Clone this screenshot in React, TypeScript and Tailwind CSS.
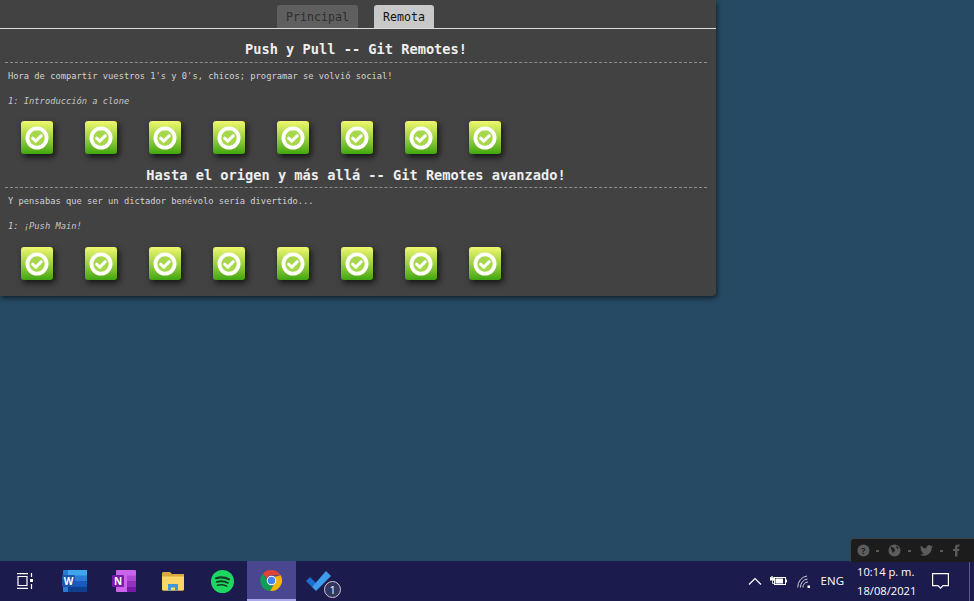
import React from "react";

const mono = "font-['DejaVu_Sans_Mono','Liberation_Mono',monospace]";

function Badge() {
  return (
    <div className="h-[33px] w-[32px] rounded-[3px] bg-gradient-to-b from-[#f1f86e] via-[#9dd23e] to-[#3fa60c] shadow-[2px_3px_6px_rgba(0,0,0,0.7)] flex items-center justify-center">
      <svg width="26" height="26" viewBox="0 0 26 26" fill="none">
        <circle cx="13" cy="13" r="9.600" stroke="#fff" strokeWidth="3.800" fill="#a6d84a" />
        <path d="M8.600 13.200l3.100 3 5.700-5.500" stroke="#fff" strokeWidth="3" strokeLinecap="round" strokeLinejoin="round" />
      </svg>
    </div>
  );
}

function Row({ mt }: { mt: string }) {
  return (
    <div className={`flex gap-[32px] pl-[16px] ${mt}`}>
      {[0, 1, 2, 3, 4, 5, 6, 7].map((i) => (
        <Badge key={i} />
      ))}
    </div>
  );
}

function Section({ title, text, level, rowMt, pt }: { title: string; text: string; level: string; rowMt: string; pt: string }) {
  return (
    <section>
      <h2 className={`h-[34px] ${pt} border-b border-dashed border-[#8d8d8d] text-center text-[13.66px] leading-[16px] font-bold text-[#eeeeee]`}>
        {title}
      </h2>
      <p className="h-[25px] pl-[3px] text-[8.76px] leading-[27px] text-[#d2d2d2]">{text}</p>
      <p className="h-[25px] pl-[3px] text-[8.76px] leading-[27px] italic text-[#c6c6c6]">{level}</p>
      <Row mt={rowMt} />
    </section>
  );
}

const Cell = ({ children, active }: { children: React.ReactNode; active?: boolean }) => (
  <div className={`h-[40px] w-[49.2px] flex items-center justify-center ${active ? "bg-[#48478f] border-b-2 border-[#a9a6ea]" : ""}`}>
    {children}
  </div>
);

const Sep = () => <span className="h-[2px] w-[3px] bg-[#5c5c5c]" />;

export default function App() {
  return (
    <div className="relative h-[601px] w-[974px] overflow-hidden flex flex-col bg-[#264a63] font-['Open_Sans',sans-serif]">
      <main className="flex-1">
        <div className={`${mono} h-[296px] w-[716px] rounded-br-[4px] bg-[#424242] shadow-[1px_2px_5px_rgba(0,0,0,0.6)]`}>
          <div className="h-[29px] pt-[5px] pl-[277px] flex gap-[16px] border-b border-[#dcdcdc]">
            <div className="h-[23px] w-[81px] rounded-t-[3px] bg-[#5f5f5f] text-center text-[11.6px] leading-[24px] text-[#2e2e2e]">Principal</div>
            <div className="h-[23px] w-[60px] rounded-t-[3px] bg-[#c8c8c8] text-center text-[11.6px] leading-[24px] text-[#111111]">Remota</div>
          </div>
          <div className="pl-[5px] pr-[9px]">
            <Section
              pt="pt-[12px]"
              title="Push y Pull -- Git Remotes!"
              text="Hora de compartir vuestros 1's y 0's, chicos; programar se volvió social!"
              level="1: Introducción a clone"
              rowMt="mt-[8px]"
            />
            <Section
              pt="pt-[13px]"
              title="Hasta el origen y más allá -- Git Remotes avanzado!"
              text="Y pensabas que ser un dictador benévolo sería divertido..."
              level="1: ¡Push Main!"
              rowMt="mt-[9px]"
            />
          </div>
        </div>
      </main>

      <div className="absolute left-[850px] top-[538px] h-[24px] w-[125px] rounded-tl-[4px] border-l border-t border-[#3c4247] bg-[#1c1c1c] flex items-center pl-[6px] text-[#5a5a5a]">
        <svg width="13" height="13" viewBox="0 0 13 13" className="mr-[6px]"><circle cx="6.500" cy="6.500" r="6" fill="#5c5c5c" /><text x="6.500" y="10" textAnchor="middle" fontSize="9" fontWeight="700" fill="#1c1c1c">?</text></svg>
        <Sep />
        <svg width="13" height="13" viewBox="0 0 13 13" className="ml-[9px] mr-[7px]"><circle cx="6.500" cy="6.500" r="6" fill="#5c5c5c" /><path d="M2.500 3l3.500.8 1 2.700-2 2.500-1.200-2.500zM8 1.500l3 2.500-2 1z" fill="#1c1c1c" /></svg>
        <Sep />
        <svg width="13" height="11" viewBox="0 0 24 20" className="ml-[9px] mr-[7px]"><path d="M24 2.400a9.800 9.800 0 0 1-2.800.800 5 5 0 0 0 2.200-2.700 9.800 9.800 0 0 1-3.100 1.200 4.900 4.900 0 0 0-8.400 4.500A14 14 0 0 1 1.700 1a4.900 4.900 0 0 0 1.500 6.600 4.900 4.900 0 0 1-2.200-.6c0 2.400 1.700 4.400 3.900 4.900a4.900 4.900 0 0 1-2.200.1 4.900 4.900 0 0 0 4.600 3.400A9.900 9.900 0 0 1 0 17.400 14 14 0 0 0 7.500 19.600c9.100 0 14.100-7.500 14.100-14v-.6A10 10 0 0 0 24 2.400z" fill="#5c5c5c" /></svg>
        <Sep />
        <svg width="7" height="13" viewBox="0 0 7 12" className="ml-[10px]"><path d="M2 12V6.500H0V4.500h2V3C2 1 3 0 4.800 0H6.500v2H5.300C4.600 2 4.400 2.300 4.400 3v1.500h2.100L6.200 6.500H4.400V12z" fill="#5c5c5c" /></svg>
      </div>

      <footer className="h-[40px] pl-[1px] bg-[#1c1b4e] flex items-center text-white">
        <Cell>
          <svg width="18" height="16" viewBox="0 0 18 16" fill="none" stroke="#fff" strokeWidth="1.200" className="-translate-x-[1px]">
            <path d="M1 .6h11M1 15.400h11M2 3.500h9v9H2z" />
            <path d="M15.500 0v4M15.500 11v5" />
            <rect x="14" y="6" width="3" height="3" fill="#fff" stroke="none" />
          </svg>
        </Cell>
        <Cell>
          <svg width="25" height="22" viewBox="0 0 25 22">
            <rect x="1" y="0" width="24" height="22" rx="1" fill="#2b7cd3" />
            <rect x="6" y="0" width="19" height="5.500" fill="#41a5ee" />
            <rect x="6" y="11" width="19" height="5.500" fill="#185abd" />
            <rect x="6" y="16.500" width="19" height="5.500" fill="#103f91" />
            <rect x="0" y="5" width="13" height="12" rx="1" fill="#1a56b0" />
            <text x="6.500" y="14.500" textAnchor="middle" fontSize="10" fontWeight="700" fill="#fff" fontFamily="Open Sans">W</text>
          </svg>
        </Cell>
        <Cell>
          <svg width="24" height="22" viewBox="0 0 24 22">
            <rect x="4" y="0" width="20" height="22" rx="1" fill="#ca64ea" />
            <rect x="15" y="5.500" width="9" height="5.500" fill="#ae4bd5" />
            <rect x="15" y="11" width="9" height="5.500" fill="#9332bf" />
            <rect x="15" y="16.500" width="9" height="5.500" fill="#7719aa" />
            <rect x="0" y="5" width="12" height="12" rx="1" fill="#7719aa" />
            <text x="6" y="14.500" textAnchor="middle" fontSize="10" fontWeight="700" fill="#fff" fontFamily="Open Sans">N</text>
          </svg>
        </Cell>
        <Cell>
          <svg width="22" height="19" viewBox="0 0 22 19">
            <path d="M0 1.500C0 .7.600 0 1.400 0H8l2 2h12v15a1.500 1.500 0 0 1-1.500 1.500h-19A1.500 1.500 0 0 1 0 17z" fill="#d9a93c" />
            <path d="M0 4.500h22V17a1.500 1.500 0 0 1-1.500 1.500h-19A1.500 1.500 0 0 1 0 17z" fill="#fcd768" />
            <path d="M6 18.500v-6.500h10v6.500h-3v-3h-4v3z" fill="#3f98d8" />
          </svg>
        </Cell>
        <Cell>
          <svg width="23" height="23" viewBox="0 0 23 23" fill="none">
            <circle cx="11.500" cy="11.500" r="11.500" fill="#1ed760" />
            <path d="M5 8.200c4.500-1.300 9-1 13 1.100" stroke="#143d22" strokeWidth="2.200" strokeLinecap="round" />
            <path d="M5.800 11.800c4-1 7.600-.7 11 1" stroke="#143d22" strokeWidth="1.900" strokeLinecap="round" />
            <path d="M6.500 15.200c3.400-.8 6.400-.5 9.200.9" stroke="#143d22" strokeWidth="1.600" strokeLinecap="round" />
          </svg>
        </Cell>
        <Cell active>
          <svg width="23" height="23" viewBox="0 0 48 48">
            <path d="M24 2a22 22 0 0 1 19.100 11H24a11 11 0 0 0-10.400 7.400L6.300 9.200A22 22 0 0 1 24 2z" fill="#db4437" />
            <path d="M6.300 9.200l9.600 16.500A11 11 0 0 0 27.800 34.300l-6.700 11.500A22 22 0 0 1 6.300 9.200z" fill="#0f9d58" />
            <path d="M43.100 13A22 22 0 0 1 21.100 45.800l9.500-16.500A11 11 0 0 0 31 16z" fill="#f4b400" />
            <circle cx="24" cy="24" r="10" fill="#fff" />
            <circle cx="24" cy="24" r="8" fill="#4285f4" />
          </svg>
        </Cell>
        <div className="relative h-[40px] w-[49px] flex items-center justify-center">
          <svg width="25" height="20" viewBox="0 0 25 20" className="-translate-x-[2px]">
            <path d="M0 10l4-4 6 6-4 4z" fill="#1b6fd0" />
            <path d="M6 16L20 0l5 5-15 15z" fill="#3f9bec" />
          </svg>
          <div className="absolute left-[28px] top-[20px] h-[17px] w-[17px] rounded-full bg-[#35355f] border border-[#c9c9d6] text-center text-[11px] leading-[15px] text-white">1</div>
        </div>

        <div className="ml-auto flex items-center">
          <svg width="14" height="8" viewBox="0 0 14 8" fill="none" stroke="#fff" strokeWidth="1.200" className="mr-[8px]"><path d="M1 7.500l6-6 6 6" /></svg>
          <svg width="17" height="10" viewBox="0 0 17 10" className="mr-[10px]">
            <path d="M0 1.500h1.500v-1h1v1H3.500v3h-1v3h2" fill="none" stroke="#fff" strokeWidth=".8" />
            <rect x="0" y="1.500" width="3.500" height="3" fill="#fff" />
            <rect x="4.500" y="1.500" width="11" height="7" fill="#1c1b4e" stroke="#fff" />
            <rect x="5.500" y="2.500" width="7.500" height="5" fill="#fff" />
            <rect x="16" y="3.500" width="1" height="3" fill="#fff" />
          </svg>
          <svg width="15" height="13" viewBox="0 0 15 13" fill="none" stroke="#cfcfd8" strokeWidth="1" className="mr-[9px]">
            <path d="M.8 12.500A11 11 0 0 1 10 1M3.500 12.500A8 8 0 0 1 10.500 4M6 12.500A5 5 0 0 1 11 7" />
            <rect x="10.500" y="10.500" width="2.500" height="2.500" fill="#fff" stroke="none" />
          </svg>
          <span className="text-[11.500px] leading-none mr-[13px]">ENG</span>
          <div className="text-[11.200px] leading-[19px] w-[61px] whitespace-nowrap mr-[14px]">
            <div>10:14 p. m.</div>
            <div>18/08/2021</div>
          </div>
          <svg width="17" height="16" viewBox="0 0 17 16" fill="none" stroke="#fff" strokeWidth="1.200" className="mr-[20px]">
            <path d="M.6.6h15.800v12H11l-2.500 2.500L6 12.600H.6z" />
          </svg>
          <div className="h-[40px] w-[5px] border-l border-[#5a5a85]" />
        </div>
      </footer>
    </div>
  );
}
